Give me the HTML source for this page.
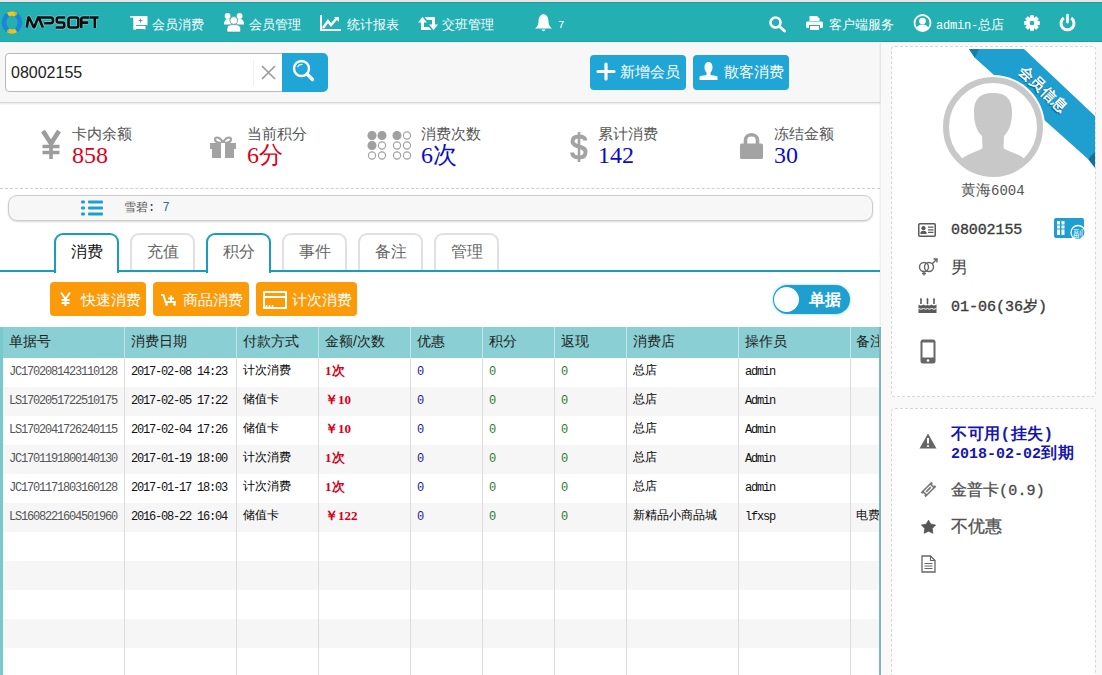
<!DOCTYPE html>
<html><head><meta charset="utf-8">
<style>
*{box-sizing:border-box;margin:0;padding:0}
html,body{width:1102px;height:675px;overflow:hidden;background:#fff;font-family:"Liberation Sans",sans-serif;color:#333}
.abs{position:absolute}
svg{position:absolute;overflow:visible}
#top{position:absolute;left:0;top:0;width:1102px;height:2px;background:#e9e4e4}
#nav{position:absolute;left:0;top:2px;width:1102px;height:40px;background:#24afb3;box-shadow:inset 0 1px #1f9c9e,inset 0 -1px #22a3a7}
.nt{position:absolute;color:#fff;font-size:13px;line-height:14px;top:16px;white-space:nowrap}
#hdr{position:absolute;left:0;top:42px;width:880px;height:61px;background:linear-gradient(#f0fafa 0,#f3fafa 3px,#f7f7f7 4px);border-bottom:1px solid #d6d6d6;box-shadow:0 1px 2px rgba(0,0,0,.10)}
#rp{position:absolute;left:881px;top:42px;width:221px;height:633px;background:#f9f9f9;box-shadow:-1px 0 2px rgba(0,0,0,.10)}
.card{position:absolute;background:#fff;border:1px dashed #d6d6d6;border-radius:4px}
.btnb{position:absolute;background:#1fa6d7;border-radius:4px;color:#fff;font-size:15px;line-height:16px}
.lbl{position:absolute;font-size:15px;line-height:16px;color:#555;top:126px}
.val{position:absolute;font-family:"Liberation Serif",serif;font-size:24px;line-height:24px;top:143px}
.tab{position:absolute;top:233px;width:65px;height:39px;border:2px solid #e0e0e0;border-bottom:none;border-radius:9px 9px 0 0;background:#fff;font-size:15.5px;line-height:15px;color:#666;text-align:center;padding-top:8.5px}
.tab.on{border-color:#1a9db8;color:#111;height:40px}
.obtn{position:absolute;top:282px;height:34px;background:#fc9b0a;border-radius:4px;color:#fff;font-size:15px;line-height:15px}
#tbl{position:absolute;left:0;top:327px;width:881px;height:348px;border-left:3px solid #79c8cc;border-right:2px solid #86bec2;overflow:hidden}
.th{position:absolute;top:0;left:0;width:876px;height:31px;background:#89cfd3}
.tr{position:absolute;left:0;width:876px;height:29px}
.cd{position:absolute;top:0;width:1px;height:348px;background:#dcdcdc}
.hd{position:absolute;top:1px;width:1px;height:30px;background:#c2e6e8}
.ht{position:absolute;top:7px;font-size:14px;line-height:15px;color:#222;white-space:nowrap}
.td{position:absolute;font-size:12px;line-height:13px;white-space:nowrap}
.mono{font-family:"Liberation Mono",monospace;font-size:12px;letter-spacing:-1.2px}
.ri{position:absolute;left:951px;white-space:nowrap}
</style></head>
<body>
<div id="top"></div>
<div id="nav">
  <!-- logo -->
  <svg style="left:1px;top:8px" width="22" height="24" viewBox="0 0 22 24">
    <ellipse cx="11" cy="12.5" rx="8" ry="9" fill="none" stroke="#1b86d8" stroke-width="4.6"/>
    <path d="M7 4.6 Q11 2.2 15 4.6" stroke="#f2c318" stroke-width="4.4" fill="none"/>
    <path d="M7 20.4 Q11 22.8 15 20.4" stroke="#e9c51c" stroke-width="4.4" fill="none"/>
    <path d="M13.5 3.2 Q15 3.6 16 4.8" stroke="#8cc63f" stroke-width="1.6" fill="none"/>
    <path d="M6 20.2 Q6.8 21.2 8.2 21.8" stroke="#8cc63f" stroke-width="1.6" fill="none"/>
  </svg>
  <svg style="left:0;top:-2px" width="110" height="40" viewBox="0 0 110 40">
    <path d="M26.8 27.5 L28.3 17.8 Q28.6 17 29.2 17.8 L33.6 27 Q34 27.8 34.4 27 L38 17.8 Q38.4 17 38.9 17.8 L42.8 27.5 M38.6 17.5 H50.8 Q53 17.5 53 20.4 Q53 23.2 50.8 23.2 H44.2 M65 17.5 H58.2 Q56.8 17.5 56.8 19 V21 Q56.8 22.5 58.2 22.5 H62.8 Q64.2 22.5 64.2 24 V26 Q64.2 27.5 62.8 27.5 H55.8 M70.5 17.5 H76.3 Q78.3 17.5 78.3 19.5 V25.5 Q78.3 27.5 76.3 27.5 H70.5 Q68.5 27.5 68.5 25.5 V19.5 Q68.5 17.5 70.5 17.5Z M89.5 17.5 H83 Q81.3 17.5 81.3 19.2 V28 M81.3 22.6 H88 M90 17.5 H98.5 M94.8 17.5 V28" stroke="#c8f0ee" stroke-opacity="0.5" stroke-width="4" fill="none" stroke-linejoin="round"/>
    <path d="M26.8 27.5 L28.3 17.8 Q28.6 17 29.2 17.8 L33.6 27 Q34 27.8 34.4 27 L38 17.8 Q38.4 17 38.9 17.8 L42.8 27.5 M38.6 17.5 H50.8 Q53 17.5 53 20.4 Q53 23.2 50.8 23.2 H44.2 M65 17.5 H58.2 Q56.8 17.5 56.8 19 V21 Q56.8 22.5 58.2 22.5 H62.8 Q64.2 22.5 64.2 24 V26 Q64.2 27.5 62.8 27.5 H55.8 M70.5 17.5 H76.3 Q78.3 17.5 78.3 19.5 V25.5 Q78.3 27.5 76.3 27.5 H70.5 Q68.5 27.5 68.5 25.5 V19.5 Q68.5 17.5 70.5 17.5Z M89.5 17.5 H83 Q81.3 17.5 81.3 19.2 V28 M81.3 22.6 H88 M90 17.5 H98.5 M94.8 17.5 V28" stroke="#0d0d0d" stroke-width="2.6" fill="none" stroke-linejoin="round"/>
  </svg>
  <!-- cart -->
  <svg style="left:130px;top:14px" width="18" height="14" viewBox="0 0 18 14">
    <rect x="0" y="0" width="4" height="1.6" fill="#fff"/>
    <rect x="3.5" y="0" width="14" height="9.3" fill="#fff"/>
    <rect x="3.5" y="0" width="2.6" height="13.6" fill="#fff"/>
    <rect x="3.5" y="10" width="12" height="3.3" fill="#fff"/>
    <rect x="6" y="9.3" width="11.5" height="0.7" fill="#24afb3"/>
    <rect x="6.1" y="13" width="7.5" height="1" fill="#24afb3"/>
    <path d="M8.5 4.6 H12.5 M10.5 2.6 V6.6" stroke="#5a8f95" stroke-width="0.9"/>
  </svg>
  <div class="nt" style="left:152px">会员消费</div>
  <!-- users -->
  <svg style="left:224px;top:11px" width="20" height="19" viewBox="0 0 20 19">
    <circle cx="3.6" cy="3" r="2.9" fill="#fff"/><circle cx="15.6" cy="3" r="2.9" fill="#fff"/>
    <path d="M0 11.5 Q0 6 4 6 Q8 6 8 11.5Z M12 11.5 Q12 6 16 6 Q20 6 20 11.5Z" fill="#fff"/>
    <circle cx="9.8" cy="7.5" r="3.9" fill="#fff" stroke="#3c8f93" stroke-width="0.7"/>
    <path d="M3 19 V15.5 Q3 11.6 9.8 11.6 Q16.6 11.6 16.6 15.5 V19Z" fill="#fff" stroke="#3c8f93" stroke-width="0.6"/>
  </svg>
  <div class="nt" style="left:249px">会员管理</div>
  <!-- chart -->
  <svg style="left:320px;top:13px" width="21" height="16" viewBox="0 0 21 16">
    <path d="M1 0 V15 H21" stroke="#fff" stroke-width="2" fill="none"/>
    <path d="M3 13 L8 6 L11 10 L17 3" stroke="#fff" stroke-width="2.5" fill="none"/>
    <path d="M14 2 H19 V7Z" fill="#fff"/>
  </svg>
  <div class="nt" style="left:347px">统计报表</div>
  <!-- retweet -->
  <svg style="left:418px;top:14.5px" width="20" height="13" viewBox="0 0 20 13">
    <path d="M4.5 0 L9 5.5 H6 V10 H11 L13.5 13 H3 V5.5 H0Z" fill="#fff"/>
    <path d="M15.5 13 L11 7.5 H14 V3 H9 L6.5 0 H17 V7.5 H20Z" fill="#fff"/>
  </svg>
  <div class="nt" style="left:442px">交班管理</div>
  <!-- bell -->
  <svg style="left:535px;top:12px" width="17" height="18" viewBox="0 0 17 18" preserveAspectRatio="none">
    <path d="M8.5 0 C4 1 3.5 5 3.5 8 C3.5 11 2 13 0 14.5 H17 C15 13 13.5 11 13.5 8 C13.5 5 13 1 8.5 0Z" fill="#fff"/>
    <path d="M6.5 15.5 Q8.5 19 10.5 15.5Z" fill="#fff"/>
  </svg>
  <div class="nt" style="left:558px;font-family:'Liberation Mono',monospace;font-size:11px">7</div>
  <!-- search -->
  <svg style="left:769px;top:14px" width="17" height="16" viewBox="0 0 17 16">
    <circle cx="6.5" cy="6.5" r="5" stroke="#fff" stroke-width="2.6" fill="none"/>
    <path d="M10.5 10.5 L15.5 15" stroke="#fff" stroke-width="3" stroke-linecap="round"/>
  </svg>
  <!-- printer -->
  <svg style="left:806px;top:13.5px" width="17" height="15" viewBox="0 0 17 15">
    <path d="M3.5 0 H11 L13.5 2.5 V5 H3.5Z" fill="#fff"/>
    <rect x="0" y="5.5" width="17" height="6.5" rx="1.5" fill="#fff"/>
    <rect x="3.5" y="9.5" width="10" height="5" fill="#fff" stroke="#24afb3" stroke-width="1"/>
  </svg>
  <div class="nt" style="left:829px">客户端服务</div>
  <!-- user circle -->
  <svg style="left:913px;top:12px" width="19" height="18" viewBox="0 0 19 18">
    <circle cx="9.5" cy="9" r="8" stroke="#fff" stroke-width="1.8" fill="none"/>
    <circle cx="9.5" cy="7" r="3.3" fill="#fff"/>
    <path d="M3.5 15 Q4 10.5 9.5 10.5 Q15 10.5 15.5 15 Q9.5 19 3.5 15Z" fill="#fff"/>
  </svg>
  <div class="nt" style="left:936px"><span style="font-family:'Liberation Mono',monospace;font-size:12px;letter-spacing:-0.2px">admin-</span>总店</div>
  <!-- gear -->
  <svg style="left:1024px;top:12.5px" width="16" height="16" viewBox="0 0 16 16">
    <g fill="#fff" transform="translate(8 8)">
      <circle r="6"/>
      <rect x="-2" y="-7.8" width="4" height="15.6" rx="0.5"/>
      <rect x="-2" y="-7.8" width="4" height="15.6" rx="0.5" transform="rotate(45)"/>
      <rect x="-2" y="-7.8" width="4" height="15.6" rx="0.5" transform="rotate(90)"/>
      <rect x="-2" y="-7.8" width="4" height="15.6" rx="0.5" transform="rotate(135)"/>
      <circle r="2.3" fill="#24afb3"/>
    </g>
  </svg>
  <!-- power -->
  <svg style="left:1059px;top:12px" width="17" height="17" viewBox="0 0 17 17">
    <path d="M4.8 4 A6.5 6.5 0 1 0 12.2 4" stroke="#fff" stroke-width="3" fill="none"/>
    <path d="M8.5 1.2 V8" stroke="#fff" stroke-width="2.8" stroke-linecap="round"/>
  </svg>
</div>

<div id="hdr">
  <div class="abs" style="left:5px;top:11px;width:278px;height:39px;background:#fff;border:1px solid #b8b8b8;border-radius:4px 0 0 4px"></div>
  <div class="abs" style="left:11px;top:22px;font-size:16px;line-height:17px;color:#222">08002155</div>
  <div class="abs" style="left:253px;top:18px;width:1px;height:26px;background:#eee"></div>
  <svg style="left:261px;top:23px" width="15" height="15" viewBox="0 0 15 15"><path d="M1 1 L14 14 M14 1 L1 14" stroke="#999" stroke-width="1.6"/></svg>
  <div class="abs" style="left:282px;top:11px;width:46px;height:39px;background:#1fa6d7;border-radius:0 5px 5px 0"></div>
  <svg style="left:292px;top:17px" width="23" height="23" viewBox="0 0 23 23">
    <circle cx="9.5" cy="9.5" r="7.5" stroke="#fff" stroke-width="2.4" fill="none"/>
    <path d="M5.5 8 Q7 5 10.5 5.5" stroke="#fff" stroke-width="1.2" fill="none"/>
    <path d="M15 15 L20.5 20.5" stroke="#fff" stroke-width="3.2" stroke-linecap="round"/>
  </svg>
  <div class="btnb" style="left:590px;top:13px;width:96px;height:35px">
    <svg style="left:7px;top:8px" width="18" height="17" viewBox="0 0 18 17"><path d="M9 1 V16 M1 8.5 H17" stroke="#fff" stroke-width="3.2" stroke-linecap="round"/></svg>
    <span class="abs" style="left:30px;top:9px">新增会员</span>
  </div>
  <div class="btnb" style="left:693px;top:13px;width:96px;height:35px">
    <svg style="left:6px;top:7px" width="18" height="18" viewBox="0 0 18 18">
      <path d="M9.5 0 C6.5 0 5.5 2.5 5.5 5.5 C5.5 8 6.5 9.5 7.5 10.5 V13 C6 13.5 3 13.8 1.5 14 L0.5 14.5 V18 H18.5 V14.5 L17.5 14 C16 13.8 13 13.5 11.5 13 V10.5 C12.5 9.5 13.5 8 13.5 5.5 C13.5 2.5 12.5 0 9.5 0Z" fill="#fff"/>
    </svg>
    <span class="abs" style="left:31px;top:9px">散客消费</span>
  </div>
</div>

<!-- stats -->
<svg style="left:41px;top:131px" width="20" height="28" viewBox="0 0 20 28">
  <path d="M2 0 L10 12.5 L18 0" stroke="#9c9c9c" stroke-width="4.6" fill="none"/>
  <path d="M10 12 V28 M1.5 15.5 H18.5 M1.5 21.5 H18.5" stroke="#9c9c9c" stroke-width="3.6"/>
</svg>
<div class="lbl" style="left:72px">卡内余额</div>
<div class="val" style="left:72px;color:#e0001a">858</div>

<svg style="left:210px;top:136px" width="26" height="22" viewBox="0 0 26 22">
  <path d="M13 7 C11 1 5 0 5 3.5 C5 6 9 7 13 7 C17 7 21 6 21 3.5 C21 0 15 1 13 7Z" stroke="#a3a3a3" stroke-width="2.2" fill="none"/>
  <rect x="0" y="7" width="26" height="6" fill="#a3a3a3"/>
  <rect x="2" y="13" width="22" height="9" fill="#a3a3a3"/>
  <rect x="11" y="7" width="4" height="15" fill="#fff"/>
</svg>
<div class="lbl" style="left:247px">当前积分</div>
<div class="val" style="left:247px;color:#e0001a">6分</div>

<svg style="left:367px;top:131px" width="45" height="29" viewBox="0 0 45 29">
  <g stroke="#a0a0a0" stroke-width="1.1">
    <circle cx="5" cy="4.5" r="4" fill="#a0a0a0"/><circle cx="15" cy="4.5" r="4" fill="#a0a0a0"/>
    <circle cx="5" cy="14.5" r="4" fill="#a0a0a0"/><circle cx="15" cy="14.5" r="3.6" fill="none"/>
    <circle cx="5" cy="24.5" r="3.6" fill="none"/><circle cx="15" cy="24.5" r="3.6" fill="none"/>
    <circle cx="30" cy="4.5" r="4" fill="#a0a0a0"/><circle cx="40" cy="4.5" r="3.6" fill="none"/>
    <circle cx="30" cy="14.5" r="3.6" fill="none"/><circle cx="40" cy="14.5" r="3.6" fill="none"/>
    <circle cx="30" cy="24.5" r="3.6" fill="none"/><circle cx="40" cy="24.5" r="3.6" fill="none"/>
  </g>
</svg>
<div class="lbl" style="left:421px">消费次数</div>
<div class="val" style="left:421px;color:#0c0cc8">6次</div>

<svg style="left:570px;top:132px" width="18" height="30" viewBox="0 0 18 30">
  <path d="M9 0 V30" stroke="#a3a3a3" stroke-width="2.6"/>
  <path d="M15.5 8.5 C15 5 12 4.5 9 4.5 C5 4.5 2.5 6 2.5 9.5 C2.5 16 15.5 13 15.5 20 C15.5 24 12.5 25.5 9 25.5 C5 25.5 2.5 24 2 20.5" stroke="#a3a3a3" stroke-width="4" fill="none"/>
</svg>
<div class="lbl" style="left:598px">累计消费</div>
<div class="val" style="left:598px;color:#0c0cc8">142</div>

<svg style="left:740px;top:132px" width="23" height="27" viewBox="0 0 23 27">
  <path d="M5.5 12 V8 C5.5 1 17.5 1 17.5 8 V12" stroke="#a3a3a3" stroke-width="3.6" fill="none"/>
  <rect x="0" y="11.5" width="23" height="15.5" rx="1.5" fill="#a3a3a3"/>
</svg>
<div class="lbl" style="left:774px">冻结金额</div>
<div class="val" style="left:774px;color:#0c0cc8">30</div>

<div class="abs" style="left:0;top:188px;width:880px;height:0;border-top:1px dashed #cfcfcf"></div>
<div class="abs" style="left:8px;top:195px;width:865px;height:26px;background:#f7f7f7;border:1px solid #cccccc;border-radius:9px;box-shadow:0 1px 2px rgba(0,0,0,.15)"></div>
<svg style="left:81px;top:200px" width="22" height="16" viewBox="0 0 22 16">
  <g fill="#1e9fd0"><rect x="0" y="0.5" width="4" height="3" rx="1"/><rect x="0" y="6.5" width="4" height="3" rx="1"/><rect x="0" y="12.5" width="4" height="3" rx="1"/>
  <rect x="7" y="0.5" width="15" height="3" rx="1"/><rect x="7" y="6.5" width="15" height="3" rx="1"/><rect x="7" y="12.5" width="15" height="3" rx="1"/></g>
</svg>
<div class="abs" style="left:124px;top:201px;font-size:12px;line-height:13px;color:#555">雪碧<span style="font-family:'Liberation Mono',monospace;color:#333">: </span><span style="font-family:'Liberation Mono',monospace;color:#2c6f80">7</span></div>

<!-- tabs -->
<div class="abs" style="left:0;top:270px;width:880px;height:2px;background:#1a9db8"></div>
<div class="tab on" style="left:54px">消费</div>
<div class="tab" style="left:130px;height:37px">充值</div>
<div class="tab on" style="left:206px;color:#666">积分</div>
<div class="tab" style="left:282px;height:37px">事件</div>
<div class="tab" style="left:358px;height:37px">备注</div>
<div class="tab" style="left:434px;height:37px">管理</div>

<!-- orange buttons -->
<div class="obtn" style="left:50px;width:96px">
  <svg style="left:10px;top:10px" width="11" height="14" viewBox="0 0 11 14"><path d="M1 0.5 L5.5 7 L10 0.5 M5.5 6.5 V14 M1.5 8 H9.5 M1.5 11 H9.5" stroke="#fff" stroke-width="2" fill="none"/></svg>
  <span class="abs" style="left:31px;top:10px">快速消费</span>
</div>
<div class="obtn" style="left:153px;width:96px">
  <svg style="left:8px;top:12px" width="16" height="12" viewBox="0 0 16 12"><path d="M0 1 H2.5 L4.5 8 H15" stroke="#fff" stroke-width="1.8" fill="none"/><path d="M7 4.5 H13 M10 1.5 V7.5" stroke="#fff" stroke-width="1.8"/><circle cx="5.5" cy="10.5" r="1.4" fill="#fff"/><circle cx="13.5" cy="10.5" r="1.4" fill="#fff"/></svg>
  <span class="abs" style="left:30px;top:10px">商品消费</span>
</div>
<div class="obtn" style="left:256px;width:101px">
  <svg style="left:7px;top:9px" width="24" height="18" viewBox="0 0 24 18"><rect x="1" y="1" width="22" height="16" stroke="#fff" stroke-width="2" fill="none"/><path d="M1 6 H23" stroke="#fff" stroke-width="2"/><path d="M3.5 14 V16 M6.5 14 V16 M9.5 14 V16" stroke="#fff" stroke-width="1.5"/></svg>
  <span class="abs" style="left:36px;top:10px">计次消费</span>
</div>

<!-- toggle -->
<div class="abs" style="left:773px;top:285px;width:77px;height:29px;background:#1e9fd0;border-radius:15px;box-shadow:0 0 3px rgba(30,159,208,.5)"></div>
<div class="abs" style="left:774px;top:287px;width:25px;height:25px;background:#fff;border-radius:50%"></div>
<div class="abs" style="left:809px;top:291px;font-size:16px;line-height:17px;font-weight:bold;color:#fff">单据</div>

<!-- table -->
<div id="tbl">
  <div class="th"></div>
  <div class="tr" style="top:60px;background:#f6f6f6"></div>
  <div class="tr" style="top:118px;background:#f6f6f6"></div>
  <div class="tr" style="top:176px;background:#f6f6f6"></div>
  <div class="tr" style="top:234px;background:#f6f6f6"></div>
  <div class="tr" style="top:292px;background:#f6f6f6"></div>
  <div class="cd" style="left:121px"></div><div class="cd" style="left:233px"></div><div class="cd" style="left:315px"></div>
  <div class="cd" style="left:407px"></div><div class="cd" style="left:479px"></div><div class="cd" style="left:551px"></div>
  <div class="cd" style="left:623px"></div><div class="cd" style="left:735px"></div><div class="cd" style="left:847px"></div>
  <div class="hd" style="left:121px"></div><div class="hd" style="left:233px"></div><div class="hd" style="left:315px"></div>
  <div class="hd" style="left:407px"></div><div class="hd" style="left:479px"></div><div class="hd" style="left:551px"></div>
  <div class="hd" style="left:623px"></div><div class="hd" style="left:735px"></div><div class="hd" style="left:847px"></div>
  <div class="ht" style="left:6px">单据号</div>
  <div class="ht" style="left:128px">消费日期</div>
  <div class="ht" style="left:240px">付款方式</div>
  <div class="ht" style="left:322px">金额/次数</div>
  <div class="ht" style="left:414px">优惠</div>
  <div class="ht" style="left:486px">积分</div>
  <div class="ht" style="left:558px">返现</div>
  <div class="ht" style="left:630px">消费店</div>
  <div class="ht" style="left:742px">操作员</div>
  <div class="ht" style="left:853px">备注</div>
  <div id="rows"><!--R--><div class="td mono" style="left:6px;top:39px;color:#555">JC1702081423110128</div>
<div class="td mono" style="left:128px;top:39px;color:#111">2017-02-08 14:23</div>
<div class="td" style="left:240px;top:37px;color:#000;font-size:12px">计次消费</div>
<div class="td" style="left:322px;top:37px;color:#d4001a;font-weight:bold;font-family:'Liberation Serif',serif;font-size:13px">1次</div>
<div class="td mono" style="left:414px;top:39px;color:#1a1a9a">0</div>
<div class="td mono" style="left:486px;top:39px;color:#2a7a2a">0</div>
<div class="td mono" style="left:558px;top:39px;color:#2a7a2a">0</div>
<div class="td" style="left:630px;top:37px;color:#000;font-size:12px">总店</div>
<div class="td mono" style="left:742px;top:39px;color:#111">admin</div>
<div class="td mono" style="left:6px;top:68px;color:#555">LS1702051722510175</div>
<div class="td mono" style="left:128px;top:68px;color:#111">2017-02-05 17:22</div>
<div class="td" style="left:240px;top:66px;color:#000;font-size:12px">储值卡</div>
<div class="td" style="left:322px;top:66px;color:#d4001a;font-weight:bold;font-family:'Liberation Serif',serif;font-size:13px">￥10</div>
<div class="td mono" style="left:414px;top:68px;color:#1a1a9a">0</div>
<div class="td mono" style="left:486px;top:68px;color:#2a7a2a">0</div>
<div class="td mono" style="left:558px;top:68px;color:#2a7a2a">0</div>
<div class="td" style="left:630px;top:66px;color:#000;font-size:12px">总店</div>
<div class="td mono" style="left:742px;top:68px;color:#111">Admin</div>
<div class="td mono" style="left:6px;top:97px;color:#555">LS1702041726240115</div>
<div class="td mono" style="left:128px;top:97px;color:#111">2017-02-04 17:26</div>
<div class="td" style="left:240px;top:95px;color:#000;font-size:12px">储值卡</div>
<div class="td" style="left:322px;top:95px;color:#d4001a;font-weight:bold;font-family:'Liberation Serif',serif;font-size:13px">￥10</div>
<div class="td mono" style="left:414px;top:97px;color:#1a1a9a">0</div>
<div class="td mono" style="left:486px;top:97px;color:#2a7a2a">0</div>
<div class="td mono" style="left:558px;top:97px;color:#2a7a2a">0</div>
<div class="td" style="left:630px;top:95px;color:#000;font-size:12px">总店</div>
<div class="td mono" style="left:742px;top:97px;color:#111">Admin</div>
<div class="td mono" style="left:6px;top:126px;color:#555">JC1701191800140130</div>
<div class="td mono" style="left:128px;top:126px;color:#111">2017-01-19 18:00</div>
<div class="td" style="left:240px;top:124px;color:#000;font-size:12px">计次消费</div>
<div class="td" style="left:322px;top:124px;color:#d4001a;font-weight:bold;font-family:'Liberation Serif',serif;font-size:13px">1次</div>
<div class="td mono" style="left:414px;top:126px;color:#1a1a9a">0</div>
<div class="td mono" style="left:486px;top:126px;color:#2a7a2a">0</div>
<div class="td mono" style="left:558px;top:126px;color:#2a7a2a">0</div>
<div class="td" style="left:630px;top:124px;color:#000;font-size:12px">总店</div>
<div class="td mono" style="left:742px;top:126px;color:#111">Admin</div>
<div class="td mono" style="left:6px;top:155px;color:#555">JC1701171803160128</div>
<div class="td mono" style="left:128px;top:155px;color:#111">2017-01-17 18:03</div>
<div class="td" style="left:240px;top:153px;color:#000;font-size:12px">计次消费</div>
<div class="td" style="left:322px;top:153px;color:#d4001a;font-weight:bold;font-family:'Liberation Serif',serif;font-size:13px">1次</div>
<div class="td mono" style="left:414px;top:155px;color:#1a1a9a">0</div>
<div class="td mono" style="left:486px;top:155px;color:#2a7a2a">0</div>
<div class="td mono" style="left:558px;top:155px;color:#2a7a2a">0</div>
<div class="td" style="left:630px;top:153px;color:#000;font-size:12px">总店</div>
<div class="td mono" style="left:742px;top:155px;color:#111">admin</div>
<div class="td mono" style="left:6px;top:184px;color:#555">LS1608221604501960</div>
<div class="td mono" style="left:128px;top:184px;color:#111">2016-08-22 16:04</div>
<div class="td" style="left:240px;top:182px;color:#000;font-size:12px">储值卡</div>
<div class="td" style="left:322px;top:182px;color:#d4001a;font-weight:bold;font-family:'Liberation Serif',serif;font-size:13px">￥122</div>
<div class="td mono" style="left:414px;top:184px;color:#1a1a9a">0</div>
<div class="td mono" style="left:486px;top:184px;color:#2a7a2a">0</div>
<div class="td mono" style="left:558px;top:184px;color:#2a7a2a">0</div>
<div class="td" style="left:630px;top:182px;color:#000;font-size:12px">新精品小商品城</div>
<div class="td mono" style="left:742px;top:184px;color:#111">lfxsp</div>
<div class="td" style="left:853px;top:182px;color:#111;font-size:12px">电费</div><!--/R--></div>
</div>

<!-- right panel -->
<div id="rp">
  <div class="card" style="left:10px;top:4px;width:205px;height:351px;overflow:hidden">
    <!-- ribbon -->
    <svg style="left:0;top:1px" width="205" height="351" viewBox="0 0 205 351">
      <path d="M77 1 L132 1 L203 68 L203 106 L196 111 L83 10 Z" fill="#1e9fd0"/>
      <path d="M77 1 L83 10 L87 1 Z" fill="#167fae"/>
      <path d="M196 111 L203 104 L203 120 Z" fill="#146f99"/>
    </svg>
    <!-- avatar -->
    <svg style="left:46px;top:25px" width="110" height="110" viewBox="-5 -5 110 110">
      <defs><clipPath id="cc"><circle cx="50" cy="50" r="47"/></clipPath></defs>
      <circle cx="50" cy="50" r="52" fill="#fff"/>
      <circle cx="50" cy="50" r="47" fill="#fff" stroke="#c8c8c8" stroke-width="6"/>
      <g clip-path="url(#cc)" fill="#c8c8c8">
        <path d="M50 16 C38 16 31 21 31 35 C31 45 33 53 39 59 L39.5 71 C35 75 24 76 16 84 L4 100 H96 L84 84 C76 76 65 75 60.5 71 L61 59 C67 53 69 45 69 35 C69 21 62 16 50 16Z"/>
      </g>
    </svg>
    <div class="abs" style="left:120px;top:35px;width:62px;text-align:center;transform:rotate(44deg);transform-origin:50% 50%;color:#fff;font-weight:bold;font-size:14.5px;line-height:15px;text-shadow:0 1px 1px #0a5f88">会员信息</div>
  </div>
  <div class="card" style="left:10px;top:366px;width:205px;height:320px"></div>
</div>
<div class="abs" style="left:961px;top:182px;font-size:15px;line-height:16px;color:#555">黄海<span style="font-family:'Liberation Mono',monospace;font-size:14px">6004</span></div>
<!-- id card icon -->
<svg style="left:918px;top:223px" width="18" height="14" viewBox="0 0 18 14">
  <rect x="0.75" y="0.75" width="16.5" height="12.5" rx="1" stroke="#5a5a5a" stroke-width="1.5" fill="#fff"/>
  <circle cx="5.5" cy="5.2" r="2.1" fill="#5a5a5a"/><path d="M2.3 11 Q2.3 7.8 5.5 7.8 Q8.7 7.8 8.7 11Z" fill="#5a5a5a"/>
  <path d="M10 4.2 H15.5 M10 6.8 H15.5 M10 9.4 H15.5" stroke="#5a5a5a" stroke-width="1.3"/>
</svg>
<div class="ri" style="top:223px;font-family:'Liberation Mono',monospace;font-weight:normal;font-size:15px;line-height:16px;color:#3a3a3a;letter-spacing:-0.1px;-webkit-text-stroke:0.35px #3a3a3a">08002155</div>
<svg style="left:1054px;top:218px" width="32" height="22" viewBox="0 0 32 22">
  <rect x="0" y="0" width="30" height="20" rx="2" fill="#1e9fd0"/>
  <rect x="3" y="3" width="3" height="14" fill="#fff"/><rect x="7.5" y="3" width="3" height="14" fill="#fff"/>
  <path d="M3 7 H11 M3 11 H11" stroke="#1e9fd0" stroke-width="1.2"/>
  <circle cx="24" cy="14.5" r="7" fill="#1e9fd0" stroke="#fff" stroke-width="1.3"/>
  <text x="24" y="18.5" font-size="10" fill="#fff" text-anchor="middle" font-family="Liberation Sans">副</text>
</svg>
<!-- gender -->
<svg style="left:918px;top:258px" width="20" height="18" viewBox="0 0 20 18">
  <circle cx="6" cy="9" r="4.5" stroke="#666" stroke-width="1.4" fill="none"/>
  <circle cx="11" cy="9" r="4.5" stroke="#666" stroke-width="1.4" fill="none"/>
  <path d="M14 6 L19 1 M15.5 1 H19 V4.5 M6 13.5 V17.5 M4 15.5 H8" stroke="#666" stroke-width="1.4" fill="none"/>
</svg>
<div class="ri" style="top:259px;font-size:17px;line-height:18px;color:#444;font-weight:normal">男</div>
<!-- cake -->
<svg style="left:918px;top:297px" width="19" height="16" viewBox="0 0 19 16">
  <path d="M3 0.5 L4.2 3 H1.8Z M9.5 0.5 L10.7 3 H8.3Z M16 0.5 L17.2 3 H14.8Z" fill="#5a5a5a"/>
  <path d="M3 3 V7 M9.5 3 V7 M16 3 V7" stroke="#5a5a5a" stroke-width="1.6"/>
  <path d="M0.5 7.5 Q3 9.5 5.5 7.5 Q8 9.5 9.5 7.5 Q11 9.5 13.5 7.5 Q16 9.5 18.5 7.5 V16 H0.5Z" fill="#5a5a5a"/>
  <path d="M0.5 11.5 Q3 13 5.5 11.5 Q8 13 9.5 11.5 Q11 13 13.5 11.5 Q16 13 18.5 11.5" stroke="#fff" stroke-width="1" fill="none"/>
</svg>
<div class="ri" style="top:298px;font-family:'Liberation Mono',monospace;font-weight:normal;font-size:15px;line-height:16px;color:#3a3a3a;letter-spacing:0px;-webkit-text-stroke:0.35px #3a3a3a">01-06(36<span style="font-family:'Liberation Sans',sans-serif;font-size:15px;letter-spacing:0">岁</span>)</div>
<!-- phone -->
<svg style="left:920px;top:339px" width="16" height="25" viewBox="0 0 16 25">
  <rect x="0.5" y="0.5" width="15" height="24" rx="2.5" fill="#666"/>
  <rect x="2.5" y="3.5" width="11" height="15" fill="#fff"/>
  <circle cx="8" cy="21.5" r="1.3" fill="#fff"/>
</svg>
<!-- card 2 -->
<svg style="left:919px;top:433px" width="18" height="16" viewBox="0 0 18 16">
  <path d="M9 0.5 L17.5 15.5 H0.5Z" fill="#666"/>
  <path d="M9 5 V10.5" stroke="#fff" stroke-width="2"/><circle cx="9" cy="13" r="1.1" fill="#fff"/>
</svg>
<div class="ri" style="top:425px;font-size:16px;line-height:18px;color:#1616ae;font-weight:bold;letter-spacing:0.5px">不可用<span style="font-family:'Liberation Mono',monospace">(</span>挂失<span style="font-family:'Liberation Mono',monospace">)</span><br><span style="font-family:'Liberation Mono',monospace;font-size:15px;letter-spacing:0px">2018-02-02</span>到期</div>
<svg style="left:920px;top:481px" width="17" height="17" viewBox="0 0 17 17">
  <g transform="rotate(-45 8.5 8.5)">
    <path d="M1 5 H16 V7 A1.5 1.5 0 0 0 16 10 V12 H1 V10 A1.5 1.5 0 0 0 1 7Z" fill="#777"/>
    <rect x="4" y="6.5" width="9" height="4" fill="#fff"/>
    <rect x="5.2" y="7.6" width="6.6" height="1.8" fill="#777"/>
  </g>
</svg>
<div class="ri" style="top:481px;font-size:16px;line-height:17px;color:#505050;font-weight:normal;-webkit-text-stroke:0.3px #505050">金普卡<span style="font-family:'Liberation Mono',monospace;font-weight:normal;font-size:15px;letter-spacing:0.2px;color:#444">(0.9)</span></div>
<svg style="left:921px;top:520px" width="15" height="14" viewBox="0 0 15 14">
  <path d="M7.50 0.2 L9.79 4.14 L14.54 5.01 L11.21 8.51 L11.85 13.29 L7.50 11.20 L3.15 13.29 L3.79 8.51 L0.46 5.01 L5.21 4.14Z" fill="#555" stroke="#555" stroke-width="0.8" stroke-linejoin="round"/>
</svg>
<div class="ri" style="top:518px;font-size:17px;line-height:18px;color:#505050;font-weight:normal;-webkit-text-stroke:0.3px #505050">不优惠</div>
<svg style="left:921px;top:555px" width="15" height="18" viewBox="0 0 15 18">
  <path d="M1 1 H9.5 L14 5.5 V17 H1Z" stroke="#666" stroke-width="1.3" fill="none"/>
  <path d="M9.5 1 V5.5 H14" stroke="#666" stroke-width="1.1" fill="none"/>
  <path d="M3.5 8.5 H11.5 M3.5 11 H11.5 M3.5 13.5 H11.5" stroke="#666" stroke-width="1.1"/>
</svg>
</body></html>
